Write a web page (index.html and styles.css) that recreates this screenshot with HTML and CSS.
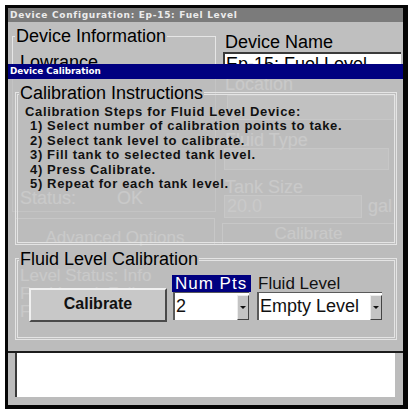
FILE: index.html
```html
<!DOCTYPE html>
<html>
<head>
<meta charset="utf-8">
<link rel="stylesheet" href="styles.css">
</head>
<body>
<div class="screen">
  <div class="win">
    <div class="win-title">Device Configuration: Ep-15: Fuel Level</div>
    <div class="win-body">
      <div class="col-left">
        <fieldset class="grp info">
          <legend>Device Information</legend>
          <div class="info-line first">Lowrance</div>
          <div class="info-line ghost status"><span class="st">Status:</span><span>OK</span></div>
        </fieldset>
        <div class="gbtn adv ghost">Advanced Options</div>
      </div>
      <div class="col-right">
        <div class="lbl">Device Name</div>
        <div class="name-field">Ep-15: Fuel Level</div>
        <div class="lbl ghost">Location</div>
        <div class="gbox loc"></div>
        <div class="lbl small ghost tlbl">Fluid Type</div>
        <div class="gbox type"></div>
        <div class="lbl small ghost slbl">Tank Size</div>
        <div class="size-row"><div class="gbox size ghost">20.0</div><span class="ghost gal">gal</span></div>
        <div class="gbtn cal-ghost ghost">Calibrate</div>
      </div>
      <div class="win-foot ghost">
        <div>Level Status: Info</div>
        <div>Fuel Level: Full</div>
        <div>Fuel Capacity: 20.0</div>
      </div>
    </div>
  </div>

  <div class="dialog">
    <div class="dlg-title">Device Calibration</div>
    <div class="dlg-body">
      <fieldset class="dgrp instr">
        <legend>Calibration Instructions</legend>
        <div class="steps">
          <div>Calibration Steps for Fluid Level Device:</div>
          <div class="s">1) Select number of calibration points to take.</div>
          <div class="s">2) Select tank level to calibrate.</div>
          <div class="s">3) Fill tank to selected tank level.</div>
          <div class="s">4) Press Calibrate.</div>
          <div class="s">5) Repeat for each tank level.</div>
        </div>
      </fieldset>
      <fieldset class="dgrp fluid">
        <legend>Fluid Level Calibration</legend>
        <div class="row">
          <div class="calbtn">Calibrate</div>
          <div class="col pts">
            <div class="numlbl">Num Pts</div>
            <div class="combo"><span class="val">2</span><span class="arrow"></span></div>
          </div>
          <div class="col lvl">
            <div class="lvllbl">Fluid Level</div>
            <div class="combo"><span class="val">Empty Level</span><span class="arrow"></span></div>
          </div>
        </div>
      </fieldset>
      <div class="sep"></div>
      <div class="note"></div>
    </div>
  </div>
</div>
</body>
</html>
```

FILE: styles.css
```css
* { box-sizing: border-box; }
html, body { margin: 0; padding: 0; background: #fff; }
body { font-family: "Liberation Sans", Arial, sans-serif; color: #000; }

.screen {
  position: relative;
  margin: 5px 0 0 5px;
  width: 403px;
  height: 404px;
  border: solid #050505;
  border-width: 3px 5px 4px 3px;
  background: #bfbfbf;
  overflow: hidden;
}

.win { height: 100%; background: #bfbfbf; }
.win-title {
  height: 14px;
  background: #7b7b7b;
  color: #ececec;
  font-family: "DejaVu Sans", sans-serif;
  font-weight: bold;
  font-size: 9px;
  letter-spacing: 0.7px;
  line-height: 14px;
  padding-left: 2px;
  white-space: nowrap;
}
.win-body {
  display: grid;
  grid-template-columns: 204px 180px;
  column-gap: 6px;
  padding: 3.6px 1px 0 4px;
}

.grp, .dgrp { margin: 0; min-width: 0; }
legend { padding: 0 1px; font-size: 18px; line-height: 21px; white-space: nowrap; }

.ghost { color: #fff; }

.info { border: 1px solid #e6e6e6; padding: 0 0 3px 7px; }
.info legend { margin-left: -5px; }
.info-line { font-size: 18px; line-height: 20.7px; white-space: nowrap; }
.info-line.first { margin-top: 5px; }
.status { margin-top: 115.3px; display: flex; }
.status .st { width: 97px; }

.gbtn {
  border: 1px solid #f6f6f6;
  font-size: 17px;
  line-height: 17px;
  text-align: center;
  white-space: nowrap;
}
.adv { margin: 5.7px 1px 0 3px; height: 27px; padding-top: 10px; }

.col-right { padding-top: 6.4px; }
.lbl { font-size: 18px; line-height: 20px; padding-left: 3px; white-space: nowrap; }
.lbl.small { line-height: 16px; }
.name-field {
  height: 22px;
  margin: 0 1px;
  background: #fff;
  border-top: 2px solid #3a3a3a;
  border-left: 2px solid #3a3a3a;
  font-size: 18px;
  line-height: 20px;
  padding-left: 1px;
  white-space: nowrap;
  overflow: hidden;
}
.gbox { background: #d4d4d4; border: 1px solid #f2f2f2; }
.loc { margin: 1px 6px 0 5px; height: 25px; }
.tlbl { margin-top: 12px; }
.type { margin: 0 13px 0 2px; height: 22px; }
.slbl { margin-top: 9px; }
.size-row { display: flex; align-items: center; height: 23px; }
.size { width: 138px; height: 23px; margin-left: 2px; font-size: 18px; line-height: 21px; padding-left: 2px; }
.gal { margin-left: 6px; font-size: 18px; }
.cal-ghost { margin: 5px 7px 0 0; height: 22px; line-height: 20px; }

.win-foot {
  grid-column: 1 / -1;
  margin-top: 22px;
  padding-left: 8px;
  font-size: 17px;
  line-height: 18px;
  white-space: nowrap;
}

.dialog {
  position: absolute;
  left: 0;
  top: 56px;
  right: 0;
  bottom: 0;
  display: flex;
  flex-direction: column;
}
.dlg-title {
  height: 15px;
  background: #000080;
  color: #fff;
  font-family: "DejaVu Sans", sans-serif;
  font-weight: bold;
  font-size: 8.8px;
  line-height: 15px;
  padding-left: 2px;
  white-space: nowrap;
}
.dlg-body {
  flex: 1;
  background: rgba(188, 188, 188, 0.8);
  padding: 3.6px 6px 0 7px;
}

.dgrp { border: 3px double #e4e4e4; }
.instr { padding: 0 0 51px 7px; }
.instr legend { margin-left: -6px; }
.steps {
  margin-top: 1.4px;
  font-weight: bold;
  font-size: 13px;
  line-height: 14.4px;
  letter-spacing: 0.65px;
  color: #111;
  white-space: nowrap;
}
.steps .s { padding-left: 5px; }

.fluid { margin-top: 3.2px; padding: 0 0 15px 11px; }
.fluid legend { margin-left: -10px; }
.row { display: flex; align-items: flex-start; margin-top: 5.4px; }
.calbtn {
  margin-top: 13px;
  width: 138px;
  height: 34px;
  background: #c8c8c8;
  border: 2px solid;
  border-color: #f0f0f0 #4a4a4a #4a4a4a #f0f0f0;
  font-weight: bold;
  font-size: 16px;
  line-height: 28px;
  text-align: center;
  color: #111;
}
.col { display: flex; flex-direction: column; }
.pts { margin-left: 5px; width: 79px; }
.lvl { margin-left: 6px; width: 125px; }
.numlbl {
  height: 17px;
  background: #000080;
  color: #fff;
  font-size: 17px;
  line-height: 17px;
  letter-spacing: 1px;
  padding-left: 3px;
  white-space: nowrap;
}
.lvllbl { height: 17px; font-size: 17px; line-height: 17px; padding-left: 1px; white-space: nowrap; color: #111; }
.combo {
  height: 28px;
  background: #fff;
  border-top: 1px solid #5a5a5a;
  border-left: 2px solid #5a5a5a;
  display: flex;
  justify-content: space-between;
  align-items: flex-start;
}
.pts .combo { margin: 0 2px 0 1px; }
.combo .val { font-size: 18px; line-height: 26px; padding-left: 1px; white-space: nowrap; color: #111; }
.arrow {
  flex: none;
  width: 12px;
  height: 25px;
  margin-top: 2px;
  background: #c4c4c4;
  border: 1px solid;
  border-color: #ededed #444 #444 #ededed;
  display: flex;
  align-items: center;
  justify-content: center;
}
.arrow::before {
  content: "";
  border-left: 3px solid transparent;
  border-right: 3px solid transparent;
  border-top: 3px solid #111;
}

.sep { height: 2px; background: #1c1c1c; margin: 11px -6px 0 -7px; }
.note { margin: 0 2px 0 0; height: 44px; background: #fff; border-left: 2px solid #3a3a3a; }
```
